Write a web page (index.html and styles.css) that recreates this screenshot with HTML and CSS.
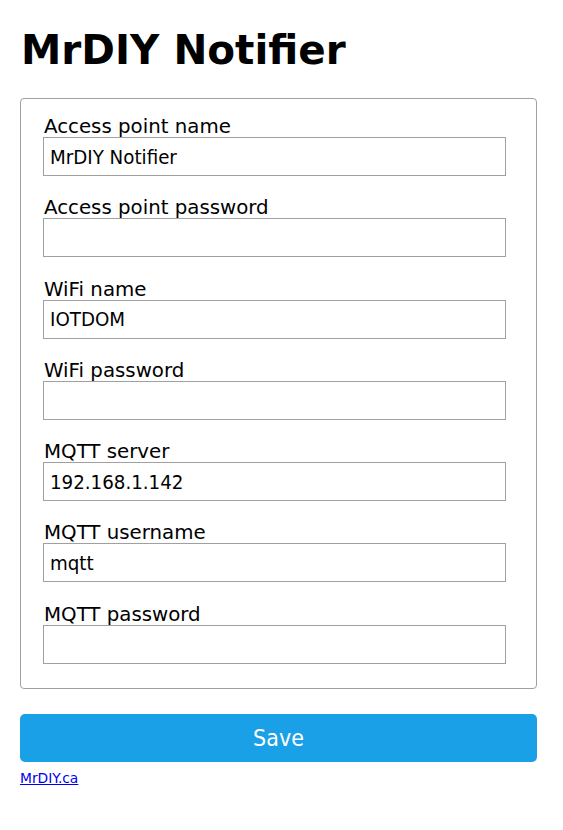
FILE: index.html
```html
<!DOCTYPE html>
<html>
<head>
<meta charset="utf-8">
<link rel="stylesheet" href="styles.css">
</head>
<body>
<div class="page">
  <h1 class="title">MrDIY Notifier</h1>
  <form class="form">
    <fieldset class="box">
      <div class="field">
        <label class="label">Access point name</label>
        <input class="input" type="text" value="MrDIY Notifier">
      </div>
      <div class="field">
        <label class="label">Access point password</label>
        <input class="input" type="password" value="">
      </div>
      <div class="field">
        <label class="label">WiFi name</label>
        <input class="input" type="text" value="IOTDOM">
      </div>
      <div class="field">
        <label class="label">WiFi password</label>
        <input class="input" type="password" value="">
      </div>
      <div class="field">
        <label class="label">MQTT server</label>
        <input class="input" type="text" value="192.168.1.142">
      </div>
      <div class="field">
        <label class="label">MQTT username</label>
        <input class="input" type="text" value="mqtt">
      </div>
      <div class="field">
        <label class="label">MQTT password</label>
        <input class="input" type="password" value="">
      </div>
    </fieldset>
    <button class="save" type="button">Save</button>
  </form>
  <a class="link" href="#">MrDIY.ca</a>
</div>
</body>
</html>
```
FILE: styles.css
```css
html, body {
  margin: 0;
  padding: 0;
  background: #fff;
}
.page {
  width: 517px;
  margin-left: 20px;
  font-family: "DejaVu Sans", Verdana, sans-serif;
  color: #000;
}
.title {
  margin: 27px 0 24px 1px;
  font-size: 40.5px;
  line-height: 47px;
  font-weight: bold;
}
.form {
  margin: 0;
}
.box {
  margin: 0;
  border: 1px solid #a0a0a0;
  border-radius: 4px;
  padding: 16px 22px 24px 22px;
  display: flex;
  flex-direction: column;
  gap: 20.3px;
  min-width: 0;
}
.field {
  display: flex;
  flex-direction: column;
}
.label {
  font-size: 19.8px;
  line-height: 23px;
  margin-bottom: -1px;
  padding-left: 1px;
}
.input {
  box-sizing: border-box;
  width: 463px;
  height: 39px;
  margin: 0;
  border: 1px solid #a0a0a0;
  border-radius: 0;
  padding: 0 6px;
  font-family: "DejaVu Sans Condensed", "DejaVu Sans", sans-serif;
  font-size: 20.3px;
  color: #000;
  background: #fff;
  outline: none;
}
.save {
  display: block;
  box-sizing: border-box;
  width: 517px;
  height: 48px;
  margin: 25px 0 0 0;
  border: 0;
  border-radius: 5px;
  background: #1aa0e6;
  color: #fff;
  font-family: "DejaVu Sans Condensed", "DejaVu Sans", sans-serif;
  font-size: 23px;
  padding: 0;
}
.link {
  display: inline-block;
  margin-top: 9px;
  font-size: 13.8px;
  line-height: 15px;
  color: #0000ee;
  text-decoration: underline;
}
```
